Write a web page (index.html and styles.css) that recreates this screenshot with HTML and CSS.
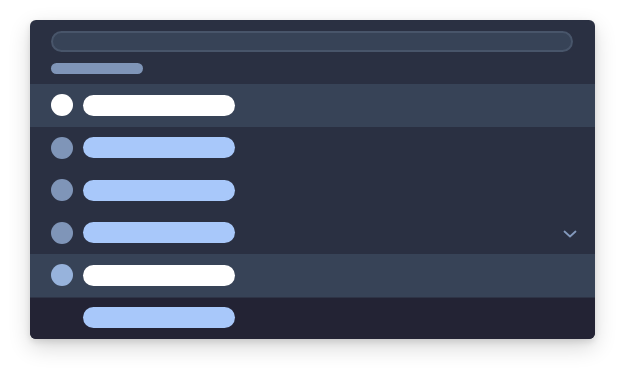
FILE: index.html
```html
<!DOCTYPE html>
<html>
<head>
<meta charset="utf-8">
<link rel="stylesheet" href="styles.css">
</head>
<body>
<div class="card">
  <div class="header">
    <div class="search"></div>
    <div class="label"></div>
  </div>
  <div class="row active">
    <span class="dot dot-white"></span>
    <span class="pill pill-white"></span>
  </div>
  <div class="row">
    <span class="dot"></span>
    <span class="pill"></span>
  </div>
  <div class="row">
    <span class="dot"></span>
    <span class="pill"></span>
  </div>
  <div class="row">
    <span class="dot"></span>
    <span class="pill"></span>
    <svg class="chevron" width="14" height="8" viewBox="0 0 14 8"><path d="M1.5 1.5 L7 6.5 L12.5 1.5" fill="none" stroke="#8399bc" stroke-width="1.8" stroke-linecap="round" stroke-linejoin="round"/></svg>
  </div>
  <div class="row active">
    <span class="dot dot-light"></span>
    <span class="pill pill-white"></span>
  </div>
  <div class="row footer">
    <span class="dot dot-none"></span>
    <span class="pill"></span>
  </div>
</div>
</body>
</html>
```

FILE: styles.css
```css
html, body {
  margin: 0;
  padding: 0;
  background: #ffffff;
  font-family: "Liberation Sans", Arial, sans-serif;
}
body {
  padding: 20px 31px 41px 30px;
  min-height: 380px;
  box-sizing: border-box;
}
.card {
  width: 565px;
  height: 319px;
  border-radius: 6px;
  overflow: hidden;
  background: #2a3042;
  box-shadow: 0 8px 22px rgba(0, 0, 0, 0.16), 0 3px 6px rgba(0, 0, 0, 0.1);
  display: flex;
  flex-direction: column;
}
.header {
  height: 64px;
  flex: none;
  box-sizing: border-box;
  padding: 11px 21px 0 21px;
  display: flex;
  flex-direction: column;
  gap: 11px;
}
.search {
  height: 21px;
  box-sizing: border-box;
  border: 2px solid #48556a;
  border-radius: 11px;
  background: #374357;
  width: 522px;
}
.label {
  width: 92px;
  height: 11px;
  border-radius: 6px;
  background: #7f95b8;
}
.row {
  flex: 1;
  display: flex;
  align-items: center;
  padding-left: 21px;
  gap: 10px;
}
.row.active {
  background: #374357;
}
.row.footer {
  background: #232334;
  box-shadow: inset 0 1px 0 #2e3446;
}
.dot {
  width: 22px;
  height: 22px;
  border-radius: 50%;
  background: #7f95b8;
  flex: none;
}
.dot-white { background: #ffffff; }
.dot-light { background: #97b3dc; }
.dot-none { background: transparent; }
.pill {
  width: 152px;
  height: 21px;
  border-radius: 11px;
  background: #a8c8fa;
  flex: none;
}
.pill-white { background: #ffffff; }
.chevron {
  margin-left: auto;
  margin-right: 18px;
  margin-top: 3px;
}
```
